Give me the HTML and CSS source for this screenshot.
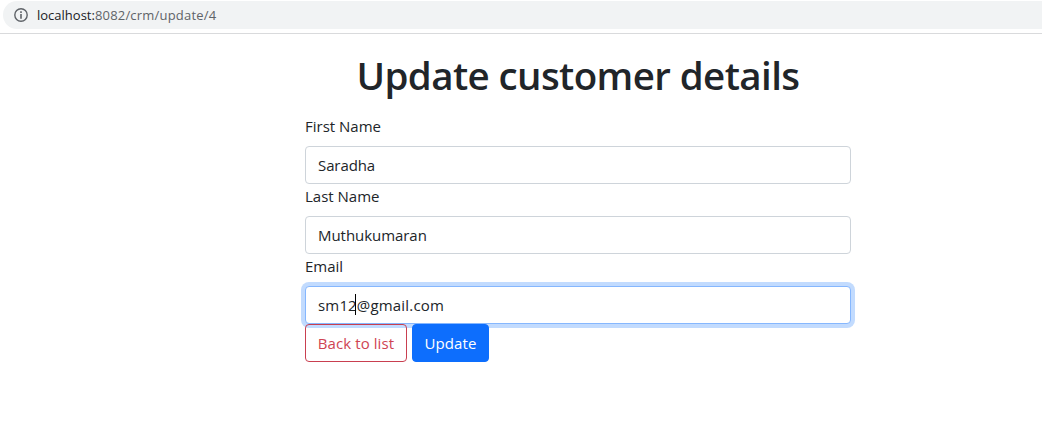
FILE: index.html
```html
<!DOCTYPE html>
<html lang="en">
<head>
<meta charset="utf-8">
<title>Update customer</title>
<link rel="stylesheet" href="styles.css">
</head>
<body>
<header class="toolbar">
  <div class="address">
    <svg class="info" width="14" height="14" viewBox="0 0 14 14"><circle cx="7" cy="7" r="6.2" fill="none" stroke="#5f6368" stroke-width="1.4"/><path d="M6.2 3.3h1.6v1.6H6.2zM6.2 6.1h1.6v4.6H6.2z" fill="#5f6368"/></svg>
    <span class="url"><span class="host">localhost:</span><span class="path">8082/crm/update/4</span></span>
  </div>
</header>
<main class="container">
  <h1 class="title"><span class="title-text">Update customer details</span></h1>
  <form class="form">
    <label class="label first-label" for="first">First Name</label>
    <input class="control first" id="first" value="Saradha">
    <label class="label last-label" for="last">Last Name</label>
    <input class="control last" id="last" value="Muthukumaran">
    <label class="label email-label" for="email">Email</label>
    <div class="field">
      <input class="control email focused" id="email" value="sm12@gmail.com">
      <span class="caret"></span>
    </div>
    <div class="actions">
      <a class="btn btn-back">Back to list</a>
      <button class="btn btn-update" type="button">Update</button>
    </div>
  </form>
</main>
</body>
</html>
```
FILE: styles.css
```css
* { box-sizing: border-box; }
body {
  margin: 0;
  background: #fff;
  color: #212529;
  font: 400 15px/24px "Open Sans", "Noto Sans", sans-serif;
  overflow: hidden;
}
.toolbar {
  height: 34px;
  padding: 1px 0 0 3px;
  border-bottom: 1px solid #d9dadc;
}
.address {
  display: flex;
  align-items: center;
  height: 28px;
  padding-left: 11px;
  border-radius: 14px 0 0 14px;
  background: #f1f3f4;
}
.info { flex: none; }
.url { margin-left: 9px; font-size: 13px; line-height: 20px; white-space: nowrap; }
.host { color: #202124; }
.path { color: #5f6368; letter-spacing: 0.2px; }
.container { width: 546px; margin: 17px 0 0 305px; }
.title {
  margin: 0 0 15px;
  height: 48px;
  font-size: 38.5px;
  font-weight: 600;
  line-height: 48px;
  letter-spacing: -0.6px;
  text-align: center;
  white-space: nowrap;
}
.form { display: flex; flex-direction: column; }
.label { height: 24px; margin-bottom: 8px; align-self: flex-start; }
.control {
  display: block;
  width: 100%;
  height: 38px;
  padding: 6px 12px;
  border: 1px solid #ced4da;
  border-radius: 4px;
  outline: 0;
  background: #fff;
  color: #212529;
  font: inherit;
}
.first { letter-spacing: -0.1px; }
.last { letter-spacing: -0.05px; }
.email { letter-spacing: 0.17px; }
.field { position: relative; }
.focused { border-color: #86b7fe; box-shadow: 0 0 0 4px #c2dbfe; }
.caret { position: absolute; left: 50px; top: 8px; width: 1px; height: 21px; background: #000; }
.actions { display: flex; gap: 5px; z-index: 1; position: relative; }
.btn {
  display: flex;
  align-items: center;
  justify-content: center;
  height: 38px;
  padding: 0;
  border: 1px solid;
  border-radius: 4px;
  font: inherit;
  white-space: nowrap;
}
.btn-back { width: 102px; border-color: #c93f50; color: #cf4453; letter-spacing: 0.08px; }
.btn-update { width: 77px; border-color: #0d6efd; background: #0d6efd; color: #fff; letter-spacing: 0.1px; }
```
